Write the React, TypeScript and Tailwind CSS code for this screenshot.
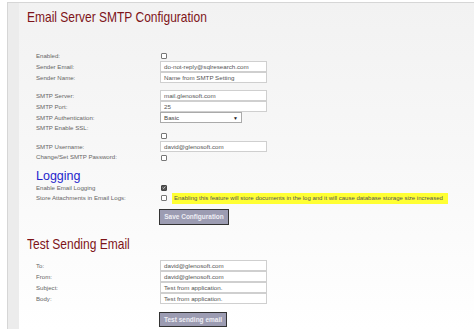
import React from 'react';

const font = { fontFamily: '"Liberation Sans", Arial, sans-serif' };

function Box({ checked = false }: { checked?: boolean }) {
  return (
    <span
      className={`flex h-[6px] w-[6px] items-center justify-center rounded-[1px] border ${
        checked ? 'border-[#444] bg-[#555]' : 'border-[#777] bg-white'
      }`}
    >
      {checked && (
        <svg viewBox="0 0 6 6" className="h-[5px] w-[5px]">
          <path d="M1 3.2 L2.4 4.5 L5 1.5" stroke="#fff" strokeWidth="1" fill="none" />
        </svg>
      )}
    </span>
  );
}

function Field({ value, w = 'w-[107px]' }: { value: string; w?: string }) {
  return (
    <div className={`${w} flex h-[11px] items-center border border-[#cfcfcf] bg-white pl-[3px] text-[6.2px] text-[#555]`}>
      {value}
    </div>
  );
}

function Row({ label, h = 'h-[11px]', children }: { label: string; h?: string; children?: React.ReactNode }) {
  return (
    <div className={`grid grid-cols-[124px_1fr] grid-rows-1 items-center ${h}`}>
      <span className="text-[6.1px] leading-[8px] text-[#666]">{label}</span>
      <div className="flex items-center">{children}</div>
    </div>
  );
}

export default function App() {
  return (
    <div className="h-[329px] w-[474px] overflow-hidden bg-white leading-[8px]" style={font}>
      <div className="ml-[7px] mt-[2px] h-[327px] border-l border-t border-[#d6d6d6] bg-[#ececec] pl-[11px]">
        <div className="h-full bg-gradient-to-b from-[#f2f2f2] via-[#f8f8f8] to-white pl-[8px]">
          <h1 className="origin-left scale-x-[0.8] pt-[5px] text-[15px] leading-[18px] whitespace-nowrap text-[#7e1419]">
            Email Server SMTP Configuration
          </h1>

          <div className="mt-[24px] pl-[9px]">
            <Row label="Enabled:">
              <span className="pl-[1px]">
                <Box />
              </span>
            </Row>
            <Row label="Sender Email:">
              <Field value="do-not-reply@sqlresearch.com" />
            </Row>
            <Row label="Sender Name:">
              <Field value="Name from SMTP Setting" />
            </Row>

            <div className="h-[7px]" />
            <Row label="SMTP Server:">
              <Field value="mail.glenosoft.com" />
            </Row>
            <Row label="SMTP Port:">
              <Field value="25" />
            </Row>
            <Row label="SMTP Authentication:">
              <div className="flex h-[11px] w-[82px] items-center justify-between border border-[#aaa] bg-white px-[3px] text-[6.2px] text-[#444]">
                <span>Basic</span>
                <span className="text-[5px] text-[#222]">▼</span>
              </div>
            </Row>
            <div className="grid h-[18px] grid-cols-[124px_1fr]">
              <span className="pt-[1px] text-[6.1px] leading-[8px] text-[#666]">SMTP Enable SSL:</span>
              <div className="flex items-end pb-[2px] pl-[1px]">
                <Box />
              </div>
            </div>
            <Row label="SMTP Username:">
              <Field value="david@glenosoft.com" />
            </Row>
            <Row label="Change/Set SMTP Password:" h="h-[9px]">
              <span className="flex pl-[1px] pt-[3px]">
                <Box />
              </span>
            </Row>
          </div>

          <h2 className="mt-[8px] pl-[9px] text-[12.5px] leading-[14px] text-[#1f1fcc]">Logging</h2>
          <div className="pl-[9px]">
            <Row label="Enable Email Logging" h="h-[9px]">
              <span className="flex pl-[1px]">
                <Box checked />
              </span>
            </Row>
            <Row label="Store Attachments in Email Logs:" h="h-[12px]">
              <span className="flex pl-[1px]">
                <Box />
              </span>
              <span className="ml-[5px] flex h-[11px] w-[276px] items-center whitespace-nowrap bg-[#ffff33] pl-[2px] text-[6px] text-[#555]">
                Enabling this feature will store documents in the log and it will cause database storage size increased
              </span>
            </Row>
            <div className="mt-[5px] flex pl-[123px]">
              <button className="h-[16px] w-[70px] border border-[#333] bg-[#9c9cb2] text-[6.5px] leading-[8px] font-bold text-[#eeeef4]">
                Save Configuration
              </button>
            </div>
          </div>

          <h1 className="mt-[5px] origin-left scale-x-[0.8] text-[15px] leading-[27px] whitespace-nowrap text-[#7e1419]">
            Test Sending Email
          </h1>
          <div className="mt-[3px] pl-[9px]">
            <Row label="To:">
              <Field value="david@glenosoft.com" />
            </Row>
            <Row label="From:">
              <Field value="david@glenosoft.com" />
            </Row>
            <Row label="Subject:">
              <Field value="Test from application." />
            </Row>
            <Row label="Body:">
              <Field value="Test from application." />
            </Row>
            <div className="mt-[8px] flex pl-[123px]">
              <button className="h-[15px] w-[68px] border border-[#333] bg-[#9c9cb2] text-[6.5px] leading-[8px] font-bold text-[#eeeef4]">
                Test sending email
              </button>
            </div>
          </div>
        </div>
      </div>
    </div>
  );
}
